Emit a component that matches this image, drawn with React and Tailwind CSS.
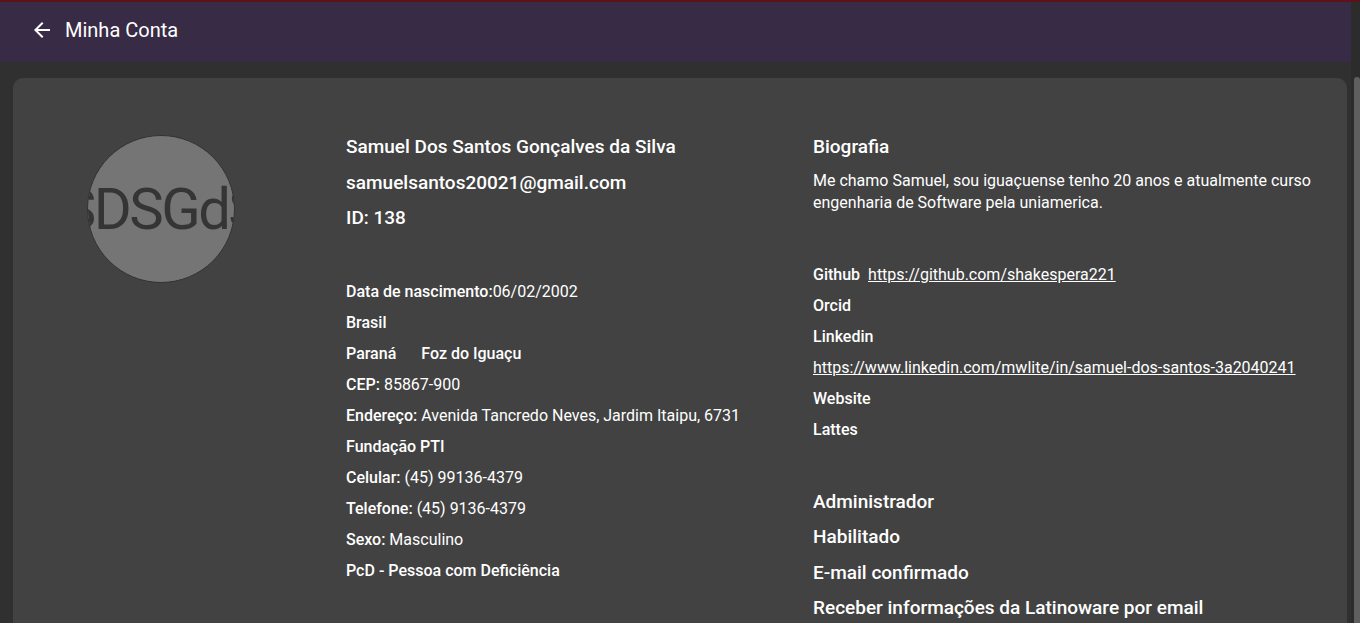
import React from "react";

const F = { fontFamily: "Roboto, 'Liberation Sans', sans-serif" };

function Row({ children, className = "" }) {
  return <div className={"text-[16px] leading-[31px] text-white " + className}>{children}</div>;
}

function Big({ children }) {
  return <div className="text-[19px] font-medium leading-[35.6px] text-white whitespace-nowrap">{children}</div>;
}

export default function App() {
  return (
    <div className="flex h-[623px] w-[1360px] overflow-hidden bg-[#303030]" style={F}>
      <div className="flex-1 flex flex-col min-w-0">
        <header className="h-[62px] shrink-0 bg-[#372b46] border-t-2 border-[#5c1216] flex items-center pl-[30px] pb-[4px]">
          <svg width="24" height="24" viewBox="0 0 24 24" fill="#ffffff">
            <path d="M20 11H7.83l5.59-5.59L12 4l-8 8 8 8 1.41-1.41L7.83 13H20v-2z" />
          </svg>
          <span className="ml-[11px] text-[20px] font-normal text-white leading-none">Minha Conta</span>
        </header>
        <div className="ml-[13px] mr-[4px] mt-[16px] flex-1 rounded-t-[10px] bg-[#424242] flex pt-[51px]">
          <div className="pl-[74px] pt-[6px] shrink-0">
            <div className="w-[148px] h-[148px] rounded-full bg-[#757575] border border-[#333] overflow-hidden flex items-center justify-center">
              <span className="text-[58px] tracking-[-2.5px] text-[#353535] whitespace-nowrap leading-none">SDSGdS</span>
            </div>
          </div>
          <div className="ml-[111px] w-[467px] shrink-0">
            <Big>Samuel Dos Santos Gonçalves da Silva</Big>
            <Big>samuelsantos20021@gmail.com</Big>
            <Big>ID: 138</Big>
            <div className="mt-[40px]">
              <Row><span className="font-medium">Data de nascimento:</span>06/02/2002</Row>
              <Row className="font-medium">Brasil</Row>
              <Row className="font-medium flex gap-[25px]"><span>Paraná</span><span>Foz do Iguaçu</span></Row>
              <Row><span className="font-medium">CEP:</span> 85867-900</Row>
              <Row><span className="font-medium">Endereço:</span> Avenida Tancredo Neves, Jardim Itaipu, 6731</Row>
              <Row className="font-medium">Fundação PTI</Row>
              <Row><span className="font-medium">Celular:</span> (45) 99136-4379</Row>
              <Row><span className="font-medium">Telefone:</span> (45) 9136-4379</Row>
              <Row><span className="font-medium">Sexo:</span> Masculino</Row>
              <Row className="font-medium">PcD - Pessoa com Deficiência</Row>
            </div>
          </div>
          <div className="w-[510px] shrink-0">
            <Big>Biografia</Big>
            <div className="mt-[5px] text-[16px] leading-[22px] text-white">
              Me chamo Samuel, sou iguaçuense tenho 20 anos e atualmente curso engenharia de Software pela uniamerica.
            </div>
            <div className="mt-[45px]">
              <Row><span className="font-medium">Github</span> <a className="ml-[4px] underline">https://github.com/shakespera221</a></Row>
              <Row className="font-medium">Orcid</Row>
              <Row className="font-medium">Linkedin</Row>
              <Row><a className="underline">https://www.linkedin.com/mwlite/in/samuel-dos-santos-3a2040241</a></Row>
              <Row className="font-medium">Website</Row>
              <Row className="font-medium">Lattes</Row>
            </div>
            <div className="mt-[39px]">
              <Big>Administrador</Big>
              <Big>Habilitado</Big>
              <Big>E-mail confirmado</Big>
              <Big>Receber informações da Latinoware por email</Big>
            </div>
          </div>
        </div>
      </div>
      <div className="w-[9px] shrink-0 bg-[#2c2c2c] flex flex-col">
        <div className="h-[2px] bg-[#5c1216]" />
        <div className="mt-[75px] ml-[3px] flex-1 rounded-t-[3px] bg-[#5f5f5f]" />
      </div>
    </div>
  );
}
